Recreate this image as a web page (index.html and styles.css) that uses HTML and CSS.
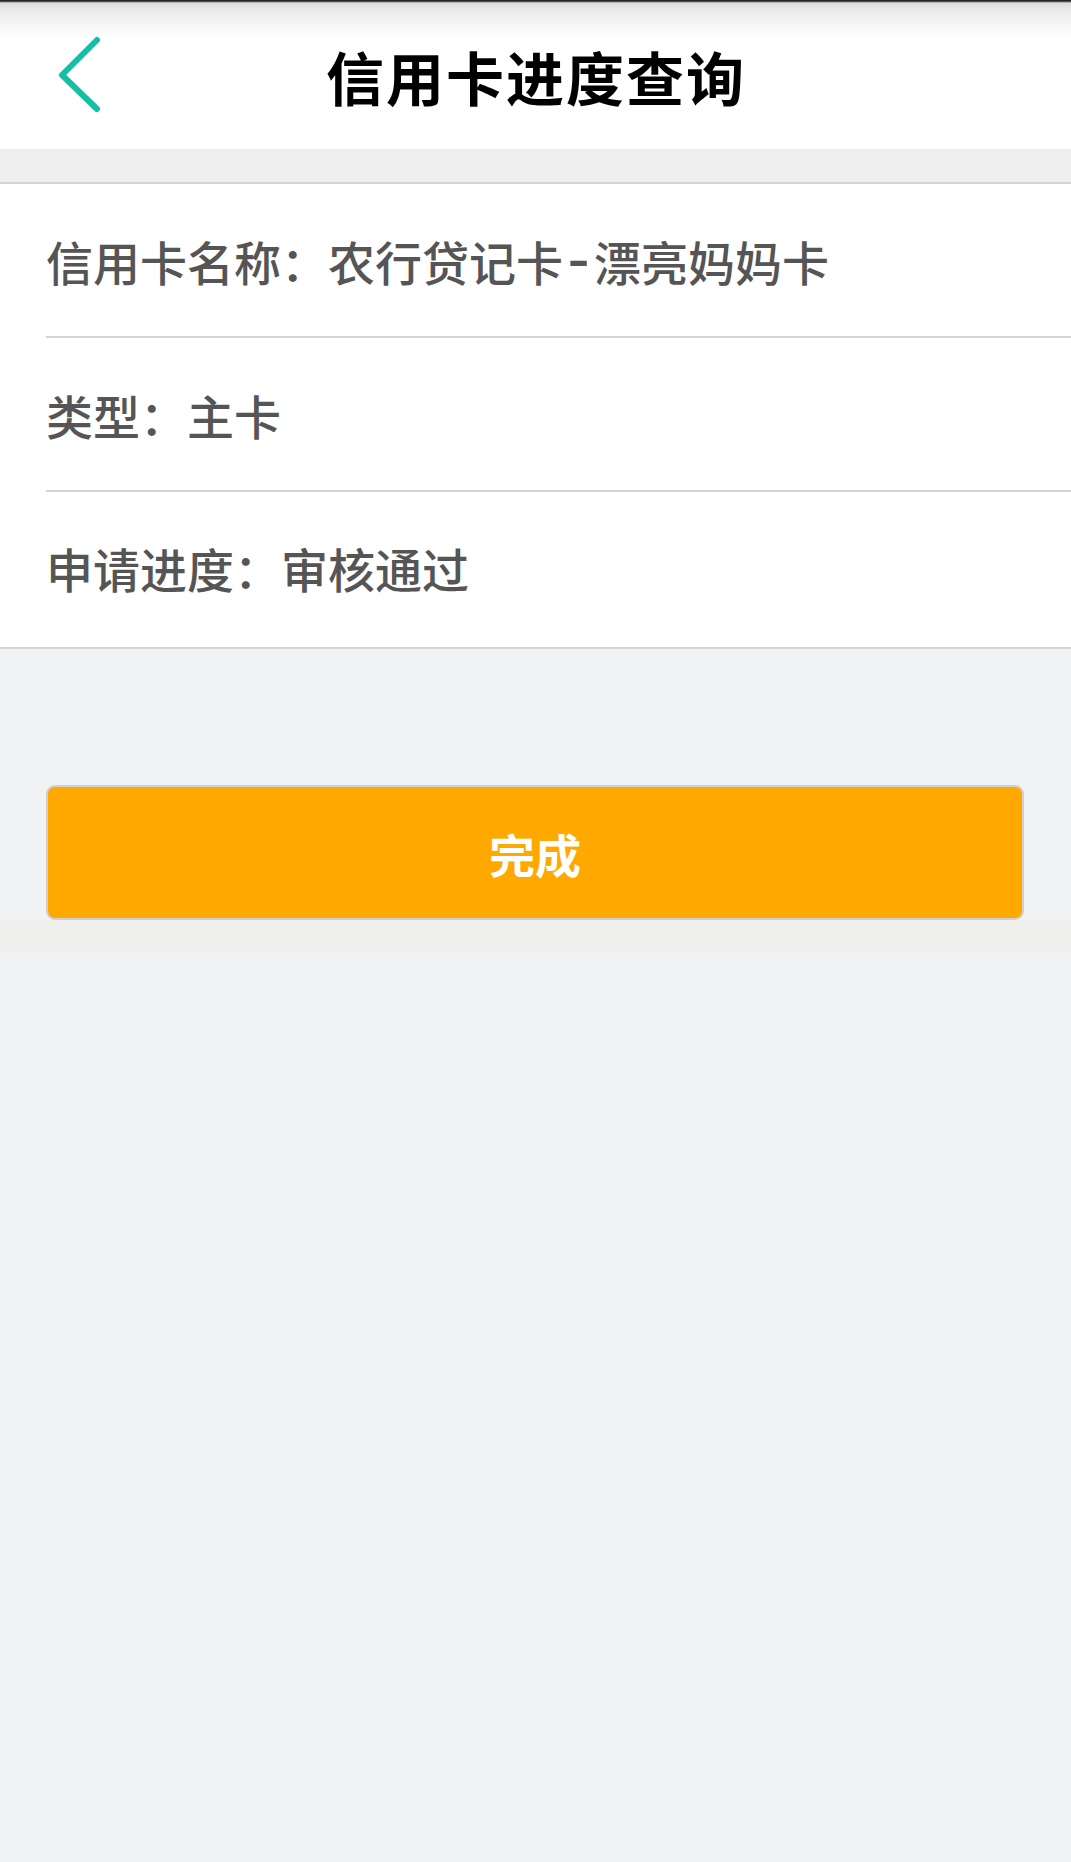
FILE: index.html
```html
<!DOCTYPE html>
<html lang="zh-CN">

<head>
  <meta charset="UTF-8">
  <meta name="viewport" content="width=device-width, initial-scale=1.0">
  <title>信用卡进度查询</title>

  <link rel="stylesheet" href="styles.css">
</head>

<body>
  <header class="topbar">
    <a class="back" href="#" aria-label="返回">
      <svg width="46" height="80" viewBox="0 0 46 80">
        <path d="M42 5 L7 40 L42 74" fill="none" stroke="#14bfa4" stroke-width="6" stroke-linecap="round" stroke-linejoin="round" />
      </svg>
    </a>
    <h1>信用卡进度查询</h1>
  </header>
  <div class="gap"></div>

  <section class="info">
    <div class="info-row"><span>信用卡名称：农行贷记卡<span class="dash">-</span>漂亮妈妈卡</span></div>
    <div class="info-row"><span>类型：主卡</span></div>
    <div class="info-row"><span>申请进度：审核通过</span></div>
  </section>

  <div class="actions">
    <button class="btn-done">完成</button>
  </div>
  <div class="band"></div>
</body>

</html>
```

FILE: styles.css
```css
* {
  margin: 0;
  padding: 0;
  box-sizing: border-box;
}

body {
  background: #f1f2f4;
  min-height: 100vh;
  font-family: "Noto Sans CJK SC", "Noto Sans", sans-serif;
  color: #555;
}

.topbar {
  display: grid;
  grid-template-columns: 1fr auto 1fr;
  align-items: center;
  height: 149px;
  padding: 0 0 0 55px;
  background: linear-gradient(#222 0, #222 1px, #dcdcdc 3px, #ececec 12px, #f9f9f9 30px, #fff 37px);
}

.back {
  display: flex;
  padding-top: 1px;
}

.topbar h1 {
  font-size: 58px;
  font-weight: 700;
  letter-spacing: 2px;
  line-height: 80px;
  color: #000;
  padding-top: 2px;
  transform: translateX(-27px);
}

.gap {
  height: 33px;
  background: #eee;
}

.info {
  background: #fff;
  border-top: 2px solid #d4d4d4;
  border-bottom: 2px solid #d4d4d4;
  padding-left: 46px;
}

.info-row {
  display: flex;
  align-items: center;
  height: 154px;
  font-size: 47px;
  font-weight: 500;
  border-bottom: 2px solid #d4d4d4;
}

.info-row:last-child {
  height: 155px;
  padding-bottom: 4px;
  border-bottom: none;
}

.dash {
  display: inline-block;
  width: 31px;
  font-size: 62px;
  line-height: 47px;
  text-align: center;
}

.actions {
  padding: 136px 47px 0 46px;
}

.btn-done {
  display: block;
  width: 100%;
  height: 135px;
  background: #ffa900;
  border: 2px solid #d0d0d0;
  border-radius: 9px;
  color: #fff;
  font-family: inherit;
  font-size: 46px;
  font-weight: 700;
}

.band {
  height: 33px;
  background: #eff0ee;
}
```
